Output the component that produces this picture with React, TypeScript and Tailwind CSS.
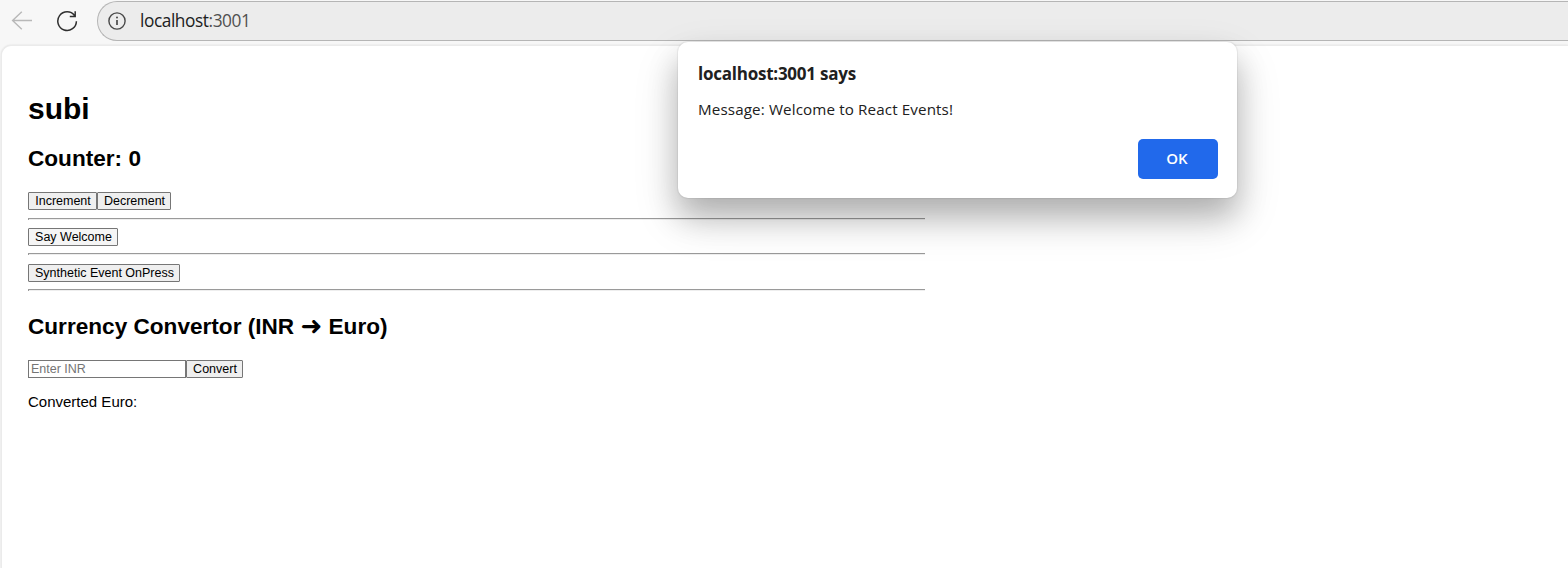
import type { ReactNode } from "react";

function PlainButton({ className, children }: { className: string; children: ReactNode }) {
  return (
    <button
      className={`flex h-[18px] shrink-0 items-center justify-center rounded-[1px] border border-[#767676] pl-px whitespace-nowrap text-[12.5px] leading-[14px] ${className}`}
    >
      {children}
    </button>
  );
}

function Rule({ className = "" }: { className?: string }) {
  return <hr className={`h-[2px] w-[897px] border-0 border-t border-l border-t-[#9a9a9a] border-l-[#9a9a9a] bg-[#eeeeee] ${className}`} />;
}

function Toolbar() {
  return (
    <header className="flex h-[45px] shrink-0 items-start pt-px">
      <svg className="mt-[9px] ml-[11px] h-[21px] w-[22px]" viewBox="0 0 22 21" fill="none" stroke="#b8b8b8" strokeWidth="1.4">
        <path d="M10.8 1.8 1.6 10.5l9.2 8.7M1.6 10.5H21" />
      </svg>
      <svg className="mt-[9px] ml-[23px] h-[22px] w-[22px]" viewBox="0 0 22 22" fill="none" stroke="#303030" strokeWidth="1.5">
        <path d="M18.6 5.6A9.3 9.3 0 1 0 20.4 11.2M19.2 1.2v5.2h-5.4" />
      </svg>
      <div className="ml-[19px] flex h-10 flex-1 items-center rounded-l-full border border-r-0 border-[#b5b5b5] bg-[#ececec] pl-[10px]">
        <svg className="h-[18px] w-[18px]" viewBox="0 0 18 18" fill="none" stroke="#484848" strokeWidth="1.4">
          <circle cx="9" cy="9" r="8.1" />
          <path d="M9 8v5" strokeWidth="1.7" />
          <circle cx="9" cy="5.6" r="1" fill="#484848" stroke="none" />
        </svg>
        <span className="ml-[14px] font-['Open_Sans',sans-serif] text-[17.3px] leading-6 tracking-[-0.43px] text-[#202020]">
          localhost<span className="text-[#505050]">:3001</span>
        </span>
      </div>
    </header>
  );
}

function AlertDialog() {
  return (
    <div
      role="dialog"
      className="absolute top-[42px] left-[678px] flex h-[156px] w-[559px] flex-col rounded-[10px] bg-white px-5 pt-5 font-['Open_Sans',sans-serif] text-[#202020] shadow-[0_0_1px_1px_rgba(0,0,0,0.06),0_18px_30px_rgba(0,0,0,0.22),0_20px_48px_rgba(0,0,0,0.14)]"
    >
      <h2 className="flex">
        <span className="text-[17px] leading-6 font-bold tracking-[-0.24px]">localhost:3001 says</span>
      </h2>
      <p className="mt-[11px] flex">
        <span className="text-[15.2px] leading-6 tracking-[0.12px]">Message: Welcome to React Events!</span>
      </p>
      <button className="mt-[18px] -mr-px flex h-10 w-20 items-center justify-center self-end rounded-[5px] bg-[#2169eb] pr-[2px] pb-[2px] text-[15px] font-semibold text-white">
        OK
      </button>
    </div>
  );
}

export default function App() {
  return (
    <div className="relative flex h-[568px] w-[1568px] flex-col overflow-hidden bg-[#f7f7f7] font-['Liberation_Sans',Arial,sans-serif] text-black">
      <Toolbar />
      <main className="ml-px flex flex-1 flex-col items-start rounded-tl-[10px] border-t border-l border-[#ebebeb] bg-white pl-[26px] shadow-[0_0_2px_rgba(0,0,0,0.12)]">
        <h1 className="mt-[46px] text-[30px] leading-[34px] font-bold">subi</h1>
        <h2 className="mt-5 text-[22.6px] leading-[26px] font-bold">Counter: 0</h2>
        <div className="mt-5 flex">
          <PlainButton className="w-[69px] bg-[#efefef]">Increment</PlainButton>
          <PlainButton className="w-[74px] bg-[#efefef]">Decrement</PlainButton>
        </div>
        <Rule className="mt-2" />
        <PlainButton className="mt-2 w-[90px] bg-[#f5f5f5]">Say Welcome</PlainButton>
        <Rule className="mt-[7px]" />
        <PlainButton className="mt-[9px] w-[152px] bg-[#efefef]">Synthetic Event OnPress</PlainButton>
        <Rule className="mt-[7px]" />
        <h2 className="mt-[23px] flex h-[26px] items-center text-[22.6px] leading-[26px] font-bold whitespace-pre">
          <span>Currency Convertor (INR </span>
          <span className="pb-[3px] font-['DejaVu_Sans',sans-serif] text-[26px]">➜</span>
          <span> Euro)</span>
        </h2>
        <div className="mt-5 flex">
          <input
            placeholder="Enter INR"
            className="h-[18px] w-[158px] border border-[#767676] bg-white px-[2px] pb-px text-[12.5px] leading-[14px] placeholder:text-[#757575]"
          />
          <PlainButton className="w-[57px] bg-[#efefef]">Convert</PlainButton>
        </div>
        <p className="mt-[15px] text-[15px] leading-[17px]">Converted Euro:</p>
      </main>
      <AlertDialog />
    </div>
  );
}
